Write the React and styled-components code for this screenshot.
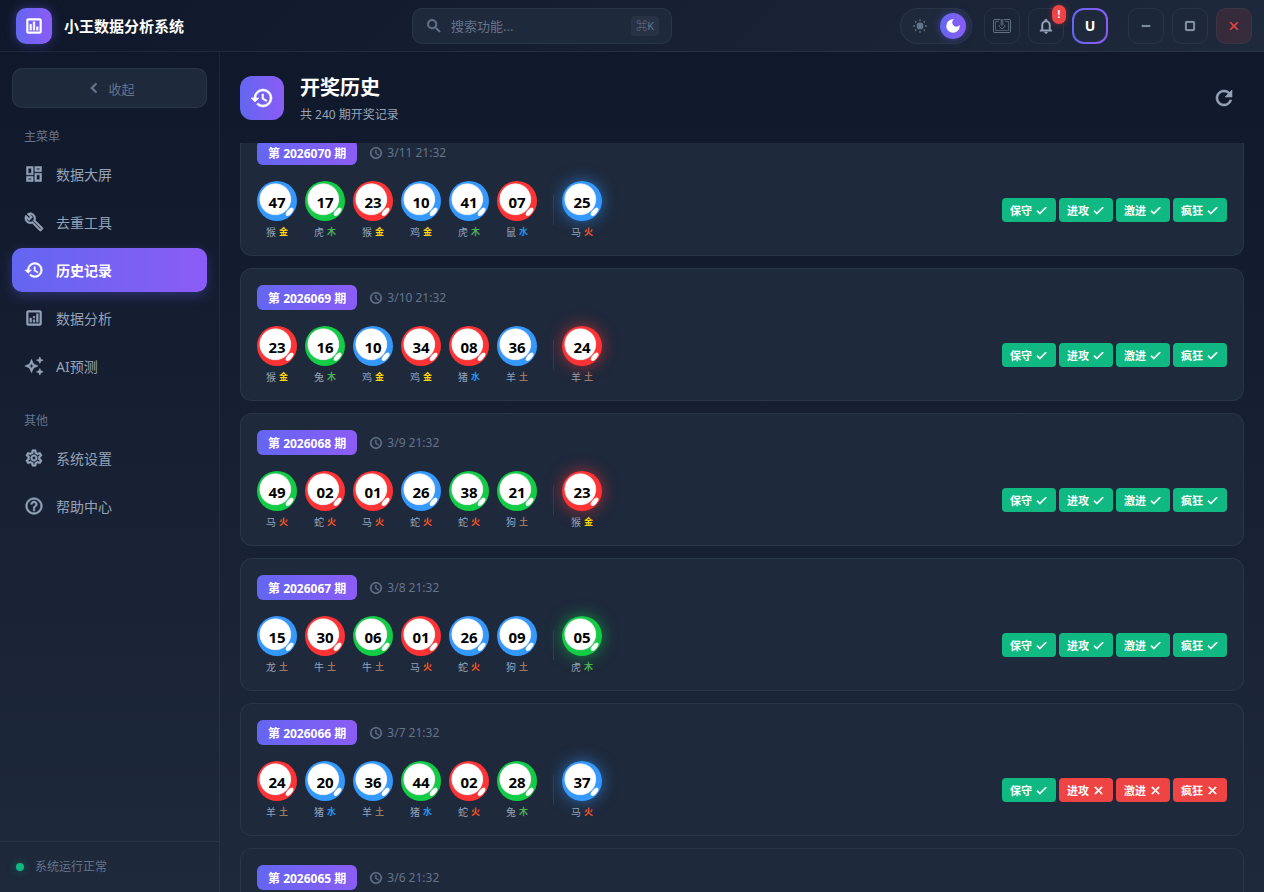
import React, { useLayoutEffect, useRef, useState } from "react";
import styled, { createGlobalStyle } from "styled-components";
import {
  MdCheck,
  MdChevronLeft,
  MdClose,
  MdCropSquare,
  MdHistory,
  MdOutlineAnalytics,
  MdOutlineAssessment,
  MdOutlineAutoAwesome,
  MdOutlineBuild,
  MdOutlineDashboard,
  MdOutlineHelpOutline,
  MdOutlineNotifications,
  MdOutlineSettings,
  MdRefresh,
  MdRemove,
  MdSchedule,
  MdSearch,
} from "react-icons/md";

const mainMenu = [
  { id: "dashboard", label: "数据大屏", icon: MdOutlineDashboard },
  { id: "dedupe", label: "去重工具", icon: MdOutlineBuild },
  { id: "history", label: "历史记录", icon: MdHistory },
  { id: "analysis", label: "数据分析", icon: MdOutlineAnalytics },
  { id: "ai", label: "AI预测", icon: MdOutlineAutoAwesome },
];

const otherMenu = [
  { id: "settings", label: "系统设置", icon: MdOutlineSettings },
  { id: "help", label: "帮助中心", icon: MdOutlineHelpOutline },
];

const ballColors = { r: "#ff3333", g: "#11cc44", b: "#3399ff" };

const elementColors = {
  金: "#ffd700",
  木: "#4caf50",
  水: "#2196f3",
  火: "#ff5722",
  土: "#a1765f",
};

const strategies = ["保守", "进攻", "激进", "疯狂"];

// every ball: number, colour, zodiac + element. The last one is the special number.
const records = [
  {
    id: "2026070",
    time: "3/11 21:32",
    balls: ["47 b 猴金", "17 g 虎木", "23 r 猴金", "10 b 鸡金", "41 b 虎木", "07 r 鼠水", "25 b 马火"],
    hits: [true, true, true, true],
  },
  {
    id: "2026069",
    time: "3/10 21:32",
    balls: ["23 r 猴金", "16 g 兔木", "10 b 鸡金", "34 r 鸡金", "08 r 猪水", "36 b 羊土", "24 r 羊土"],
    hits: [true, true, true, true],
  },
  {
    id: "2026068",
    time: "3/9 21:32",
    balls: ["49 g 马火", "02 r 蛇火", "01 r 马火", "26 b 蛇火", "38 g 蛇火", "21 g 狗土", "23 r 猴金"],
    hits: [true, true, true, true],
  },
  {
    id: "2026067",
    time: "3/8 21:32",
    balls: ["15 b 龙土", "30 r 牛土", "06 g 牛土", "01 r 马火", "26 b 蛇火", "09 b 狗土", "05 g 虎木"],
    hits: [true, true, true, true],
  },
  {
    id: "2026066",
    time: "3/7 21:32",
    balls: ["24 r 羊土", "20 b 猪水", "36 b 羊土", "44 g 猪水", "02 r 蛇火", "28 g 兔木", "37 b 马火"],
    hits: [true, false, false, false],
  },
  { id: "2026065", time: "3/6 21:32" },
];

const GlobalStyle = createGlobalStyle`
  * {
    box-sizing: border-box;
  }
  body {
    margin: 0;
    background: #0f172a;
    font-family: "Noto Sans", "Noto Sans CJK SC", sans-serif;
    color: #ffffff;
  }
  button, input {
    font-family: inherit;
  }
  button {
    cursor: pointer;
    padding: 0;
  }
  /* the icons carry an empty bounding path, keep it unstroked */
  svg path[fill="none"] {
    stroke: none;
  }
`;

const Page = styled.div`
  height: 100vh;
  display: flex;
  flex-direction: column;
  background: linear-gradient(180deg, #0f172a 0%, #1e293b 100%);
`;

const TopBar = styled.header`
  display: flex;
  align-items: center;
  justify-content: space-between;
  height: 52px;
  padding: 0 12px 0 16px;
  flex-shrink: 0;
  background: linear-gradient(135deg, #0f172a 0%, #1e293b 100%);
  border-bottom: 1px solid rgba(148, 163, 184, 0.12);
`;

const Brand = styled.div`
  display: flex;
  align-items: center;
  gap: 12px;
  font-size: 15px;
  font-weight: 700;
`;

const Logo = styled.span`
  display: flex;
  align-items: center;
  justify-content: center;
  width: 36px;
  height: 36px;
  border-radius: 10px;
  font-size: 20px;
  background: linear-gradient(90deg, #6366f1, #8b5cf6);
  box-shadow: 0 0 12px rgba(99, 102, 241, 0.4);

  svg {
    stroke-width: 0.6;
  }
`;

const SearchBox = styled.label`
  display: flex;
  align-items: center;
  gap: 8px;
  width: 260px;
  height: 36px;
  padding: 0 12px;
  border: 1px solid rgba(148, 163, 184, 0.1);
  border-radius: 10px;
  background: #1e293b;
  color: #64748b;
  font-size: 18px;

  svg {
    flex-shrink: 0;
    stroke-width: 0.8;
  }
`;

const SearchInput = styled.input`
  flex: 1;
  min-width: 0;
  padding: 0;
  border: none;
  outline: none;
  background: transparent;
  color: #ffffff;
  font-size: 13px;

  &::placeholder {
    color: #64748b;
    opacity: 1;
  }
`;

const Shortcut = styled.kbd`
  padding: 0 5px;
  border-radius: 4px;
  background: rgba(148, 163, 184, 0.08);
  color: #64748b;
  font-family: inherit;
  font-size: 11px;
  line-height: 20px;
`;

const Actions = styled.div`
  display: flex;
  align-items: center;
  gap: 8px;
`;

const ThemeSwitch = styled.button`
  display: flex;
  align-items: center;
  justify-content: space-between;
  width: 72px;
  height: 36px;
  margin-right: 4px;
  padding: 0 5px 0 11px;
  border: 1px solid rgba(148, 163, 184, 0.1);
  border-radius: 18px;
  background: #1e293b;
  color: #64748b;
`;

const Knob = styled.span`
  display: flex;
  align-items: center;
  justify-content: center;
  width: 26px;
  height: 26px;
  border-radius: 50%;
  color: #ffffff;
  background: linear-gradient(90deg, #6366f1, #8b5cf6);
  box-shadow: 0 0 8px rgba(99, 102, 241, 0.5);
`;

const SquareButton = styled.button`
  position: relative;
  display: flex;
  align-items: center;
  justify-content: center;
  width: 36px;
  height: 36px;
  border: 1px solid rgba(148, 163, 184, ${(p) => (p.$danger ? 0.08 : 0.1)});
  border-radius: 10px;
  background: ${(p) => (p.$danger ? "rgba(239, 68, 68, 0.12)" : "transparent")};
  color: ${(p) => (p.$danger ? "#ef4444" : "#94a3b8")};
  font-size: ${(p) => p.$size || 18}px;

  svg {
    stroke-width: 0.6;
  }
`;

const WindowControls = styled(Actions)`
  margin-left: 12px;

  ${SquareButton} svg {
    stroke-width: 1;
  }
`;

const Alert = styled.span`
  position: absolute;
  top: -4px;
  right: -3px;
  width: 14px;
  border-radius: 7px;
  background: #ef4444;
  color: #ffffff;
  font-size: 10px;
  font-weight: 700;
  line-height: 19px;
  text-align: center;
  box-shadow: 0 0 6px rgba(239, 68, 68, 0.4);
`;

const Avatar = styled.button`
  width: 36px;
  height: 36px;
  border: 2px solid transparent;
  border-radius: 12px;
  background: linear-gradient(#1e293b, #1e293b) padding-box,
    linear-gradient(90deg, #6366f1, #8b5cf6) border-box;
  color: #ffffff;
  font-size: 14px;
  font-weight: 700;
`;

const Body = styled.div`
  display: flex;
  flex: 1;
  min-height: 0;
`;

const Sidebar = styled.aside`
  display: flex;
  flex-direction: column;
  width: 220px;
  flex-shrink: 0;
  border-right: 1px solid rgba(148, 163, 184, 0.1);
`;

const SidebarTop = styled.div`
  display: flex;
  flex-direction: column;
  flex: 1;
  padding: 16px 12px;
`;

const CollapseButton = styled.button`
  display: flex;
  align-items: center;
  justify-content: center;
  gap: 4px;
  height: 40px;
  margin-bottom: 20px;
  border: 1px solid rgba(148, 163, 184, 0.1);
  border-radius: 10px;
  background: #1e293b;
  color: #64748b;
  font-size: 13px;

  svg {
    stroke-width: 1;
  }
`;

const Nav = styled.nav`
  display: flex;
  flex-direction: column;
  gap: 4px;
  margin-bottom: 24px;
`;

const NavTitle = styled.div`
  padding: 2px 12px 0;
  margin-bottom: 4px;
  color: #64748b;
  font-size: 12px;
  line-height: 14px;
`;

const NavItem = styled.a`
  display: flex;
  align-items: center;
  gap: 12px;
  height: 44px;
  padding: 0 12px;
  border-radius: 10px;
  color: ${(p) => (p.$active ? "#ffffff" : "#94a3b8")};
  font-size: 14px;
  font-weight: ${(p) => (p.$active ? 600 : 400)};
  text-decoration: none;
  background: ${(p) => (p.$active ? "linear-gradient(90deg, #6366f1, #8b5cf6)" : "transparent")};
  box-shadow: ${(p) => (p.$active ? "0 4px 12px rgba(99, 102, 241, 0.3)" : "none")};

  svg {
    font-size: 20px;
    stroke-width: 0.6;
  }
`;

const SystemStatus = styled.div`
  display: flex;
  align-items: center;
  gap: 11px;
  padding: 16px;
  border-top: 1px solid rgba(148, 163, 184, 0.1);
  color: #64748b;
  font-size: 12px;
  line-height: 18px;
`;

const StatusDot = styled.span`
  width: 8px;
  height: 8px;
  border-radius: 50%;
  background: #10b981;
  box-shadow: 0 0 8px rgba(16, 185, 129, 0.5);
`;

const Main = styled.main`
  display: flex;
  flex-direction: column;
  flex: 1;
  min-width: 0;
`;

const PageHeader = styled.div`
  display: flex;
  align-items: center;
  gap: 16px;
  padding: 20px 20px 19px;

  svg {
    stroke-width: 0.6;
  }
`;

const PageIcon = styled.span`
  display: flex;
  align-items: center;
  justify-content: center;
  width: 44px;
  height: 44px;
  border-radius: 12px;
  font-size: 24px;
  background: linear-gradient(90deg, #6366f1, #8b5cf6);
`;

const PageTitles = styled.div`
  flex: 1;
`;

const Title = styled.h1`
  margin: 0 0 3px;
  font-size: 20px;
  font-weight: 700;
  line-height: 31px;
`;

const Subtitle = styled.p`
  margin: 0;
  color: #94a3b8;
  font-size: 12px;
  line-height: 18px;
`;

const RefreshButton = styled.button`
  display: flex;
  align-items: center;
  justify-content: center;
  width: 40px;
  height: 40px;
  border: none;
  background: transparent;
  color: #94a3b8;
  font-size: 24px;
`;

const RecordList = styled.div`
  display: flex;
  flex-direction: column;
  gap: 12px;
  flex: 1;
  min-height: 0;
  padding: 0 20px 20px;
  overflow-y: auto;
  scrollbar-width: none;
`;

const RecordCard = styled.article`
  flex-shrink: 0;
  padding: 16px;
  border: 1px solid rgba(148, 163, 184, 0.1);
  border-radius: 12px;
  background: #1e293b;
`;

const RecordHead = styled.div`
  display: flex;
  align-items: center;
  gap: 12px;
  margin-bottom: 16px;
`;

const Period = styled.span`
  padding: 5px 11px 3px;
  border-radius: 6px;
  background: linear-gradient(90deg, #6366f1, #8b5cf6);
  font-size: 12px;
  font-weight: 700;
  line-height: 17px;
`;

const Time = styled.span`
  display: flex;
  align-items: center;
  gap: 4px;
  color: #64748b;
  font-size: 12px;
  line-height: 17px;

  svg {
    font-size: 14px;
    stroke-width: 0.8;
  }
`;

const RecordBody = styled.div`
  display: flex;
  align-items: center;
  justify-content: space-between;
  min-height: 58px;
`;

const Balls = styled.div`
  display: flex;
  align-items: center;
  gap: 8px;
`;

const BallColumn = styled.div`
  display: flex;
  flex-direction: column;
  align-items: center;
  gap: 4px;
`;

const Ball = styled.div`
  position: relative;
  width: 40px;
  height: 40px;
  border-radius: 50%;
  box-shadow: ${(p) => (p.$glow ? `0 0 16px ${p.$glow}99` : "none")};

  svg {
    display: block;
  }
`;

const BallNumber = styled.span`
  position: absolute;
  inset: 0;
  color: #000000;
  font-size: 15px;
  font-weight: 700;
  line-height: 42px;
  text-align: center;
`;

const BallLabel = styled.div`
  display: flex;
  gap: 3px;
  color: #94a3b8;
  font-size: 10px;
  line-height: 14px;
`;

const Element = styled.span`
  color: ${(p) => elementColors[p.$kind]};
  font-size: 9px;
  font-weight: 700;
`;

const Divider = styled.span`
  width: 1px;
  height: 30px;
  margin-left: 8px;
  background: rgba(148, 163, 184, 0.15);
`;

const Results = styled.div`
  display: flex;
  gap: 3px;
`;

const Result = styled.span`
  display: flex;
  align-items: center;
  gap: 3px;
  height: 24px;
  padding: 0 8px;
  border-radius: 4px;
  background: ${(p) => (p.$hit ? "#10b981" : "#ef4444")};
  font-size: 11px;
  font-weight: 600;

  svg {
    font-size: 13px;
    stroke-width: 1.4;
  }
`;

const SunIcon = () => (
  <svg width="16" height="16" viewBox="0 0 16 16" fill="none" stroke="currentColor">
    <circle cx="8" cy="8" r="3.4" fill="currentColor" stroke="none" />
    <path
      d="M8 1.2v1.8M8 13v1.8M1.2 8H3M13 8h1.8M3.2 3.2l1.2 1.2M11.6 11.6l1.2 1.2M3.2 12.8l1.2-1.2M11.6 4.4l1.2-1.2"
      strokeWidth="1.4"
    />
  </svg>
);

const MoonIcon = () => (
  <svg width="18" height="18" viewBox="0 0 24 24" fill="currentColor">
    <path d="M12 3a9 9 0 1 0 9 9c0-.46-.04-.92-.1-1.36a5.39 5.39 0 0 1-4.4 2.26 5.4 5.4 0 0 1-3.14-9.8A9.1 9.1 0 0 0 12 3z" />
  </svg>
);

const DownloadBoxIcon = () => (
  <svg width="18" height="14" viewBox="0 0 18 14" fill="none" stroke="currentColor">
    <path d="M7 .5H1.5a1 1 0 0 0-1 1v11a1 1 0 0 0 1 1h15a1 1 0 0 0 1-1v-11a1 1 0 0 0-1-1H11" />
    <path d="M6 2.5H2.5v9h13v-9H12" opacity="0.7" />
    <path d="M8.2 0v6.5M9.8 0v6.5M6.2 6.2v1.2l2 2h1.6l2-2V6.2" />
  </svg>
);

const BallDrawing = ({ color }) => (
  <svg width="40" height="40" viewBox="0 0 40 40">
    <defs>
      <radialGradient id={`face-${color.slice(1)}`}>
        <stop offset="0.9" stopColor="#ffffff" />
        <stop offset="0.95" stopColor="#e8e8ec" />
        <stop offset="1" stopColor="#e8e8ec" stopOpacity="0.2" />
      </radialGradient>
    </defs>
    <circle cx="20" cy="20" r="20" fill={color} />
    <circle cx="18.3" cy="18.3" r="16.2" fill={`url(#face-${color.slice(1)})`} />
    <ellipse cx="32.6" cy="30.8" rx="5" ry="2.4" fill="#ffffff" transform="rotate(-48 32.6 30.8)" />
  </svg>
);

const NumberBall = ({ ball, special }) => {
  const [number, colorKey, label] = ball.split(" ");
  const color = ballColors[colorKey];

  return (
    <BallColumn>
      <Ball $glow={special && color}>
        <BallDrawing color={color} />
        <BallNumber>{number}</BallNumber>
      </Ball>
      <BallLabel>
        <span>{label[0]}</span>
        <Element $kind={label[1]}>{label[1]}</Element>
      </BallLabel>
    </BallColumn>
  );
};

const Record = ({ record }) => (
  <RecordCard>
    <RecordHead>
      <Period>第 {record.id} 期</Period>
      <Time>
        <MdSchedule />
        {record.time}
      </Time>
    </RecordHead>
    <RecordBody>
      {record.balls && (
        <Balls>
          {record.balls.slice(0, 6).map((ball, i) => (
            <NumberBall key={i} ball={ball} />
          ))}
          <Divider />
          <NumberBall ball={record.balls[6]} special />
        </Balls>
      )}
      {record.hits && (
        <Results>
          {strategies.map((name, i) => (
            <Result key={name} $hit={record.hits[i]}>
              {name}
              {record.hits[i] ? <MdCheck /> : <MdClose />}
            </Result>
          ))}
        </Results>
      )}
    </RecordBody>
  </RecordCard>
);

const Menu = ({ title, items, active, onSelect }) => (
  <Nav aria-label={title}>
    <NavTitle>{title}</NavTitle>
    {items.map(({ id, label, icon: Icon }) => (
      <NavItem key={id} href={`#${id}`} $active={active === id} onClick={() => onSelect(id)}>
        <Icon />
        {label}
      </NavItem>
    ))}
  </Nav>
);

const App = () => {
  const [active, setActive] = useState("history");
  const [query, setQuery] = useState("");
  const listRef = useRef(null);

  useLayoutEffect(() => {
    listRef.current.scrollTop = 20;
  }, []);

  return (
    <Page>
      <GlobalStyle />
      <TopBar>
        <Brand>
          <Logo>
            <MdOutlineAssessment />
          </Logo>
          小王数据分析系统
        </Brand>
        <SearchBox>
          <MdSearch />
          <SearchInput
            aria-label="搜索功能"
            placeholder="搜索功能..."
            value={query}
            onChange={(e) => setQuery(e.target.value)}
          />
          <Shortcut>⌘K</Shortcut>
        </SearchBox>
        <Actions>
          <ThemeSwitch aria-label="切换主题">
            <SunIcon />
            <Knob>
              <MoonIcon />
            </Knob>
          </ThemeSwitch>
          <SquareButton aria-label="下载">
            <DownloadBoxIcon />
          </SquareButton>
          <SquareButton aria-label="通知">
            <MdOutlineNotifications />
            <Alert>!</Alert>
          </SquareButton>
          <Avatar>U</Avatar>
          <WindowControls>
            <SquareButton aria-label="最小化" $size={14}>
              <MdRemove />
            </SquareButton>
            <SquareButton aria-label="最大化" $size={14}>
              <MdCropSquare />
            </SquareButton>
            <SquareButton aria-label="关闭" $size={14} $danger>
              <MdClose />
            </SquareButton>
          </WindowControls>
        </Actions>
      </TopBar>
      <Body>
        <Sidebar>
          <SidebarTop>
            <CollapseButton>
              <MdChevronLeft size={20} />
              收起
            </CollapseButton>
            <Menu title="主菜单" items={mainMenu} active={active} onSelect={setActive} />
            <Menu title="其他" items={otherMenu} active={active} onSelect={setActive} />
          </SidebarTop>
          <SystemStatus>
            <StatusDot />
            系统运行正常
          </SystemStatus>
        </Sidebar>
        <Main>
          <PageHeader>
            <PageIcon>
              <MdHistory />
            </PageIcon>
            <PageTitles>
              <Title>开奖历史</Title>
              <Subtitle>共 240 期开奖记录</Subtitle>
            </PageTitles>
            <RefreshButton aria-label="刷新">
              <MdRefresh />
            </RefreshButton>
          </PageHeader>
          <RecordList ref={listRef}>
            {records.map((record) => (
              <Record key={record.id} record={record} />
            ))}
          </RecordList>
        </Main>
      </Body>
    </Page>
  );
};

export default App;
